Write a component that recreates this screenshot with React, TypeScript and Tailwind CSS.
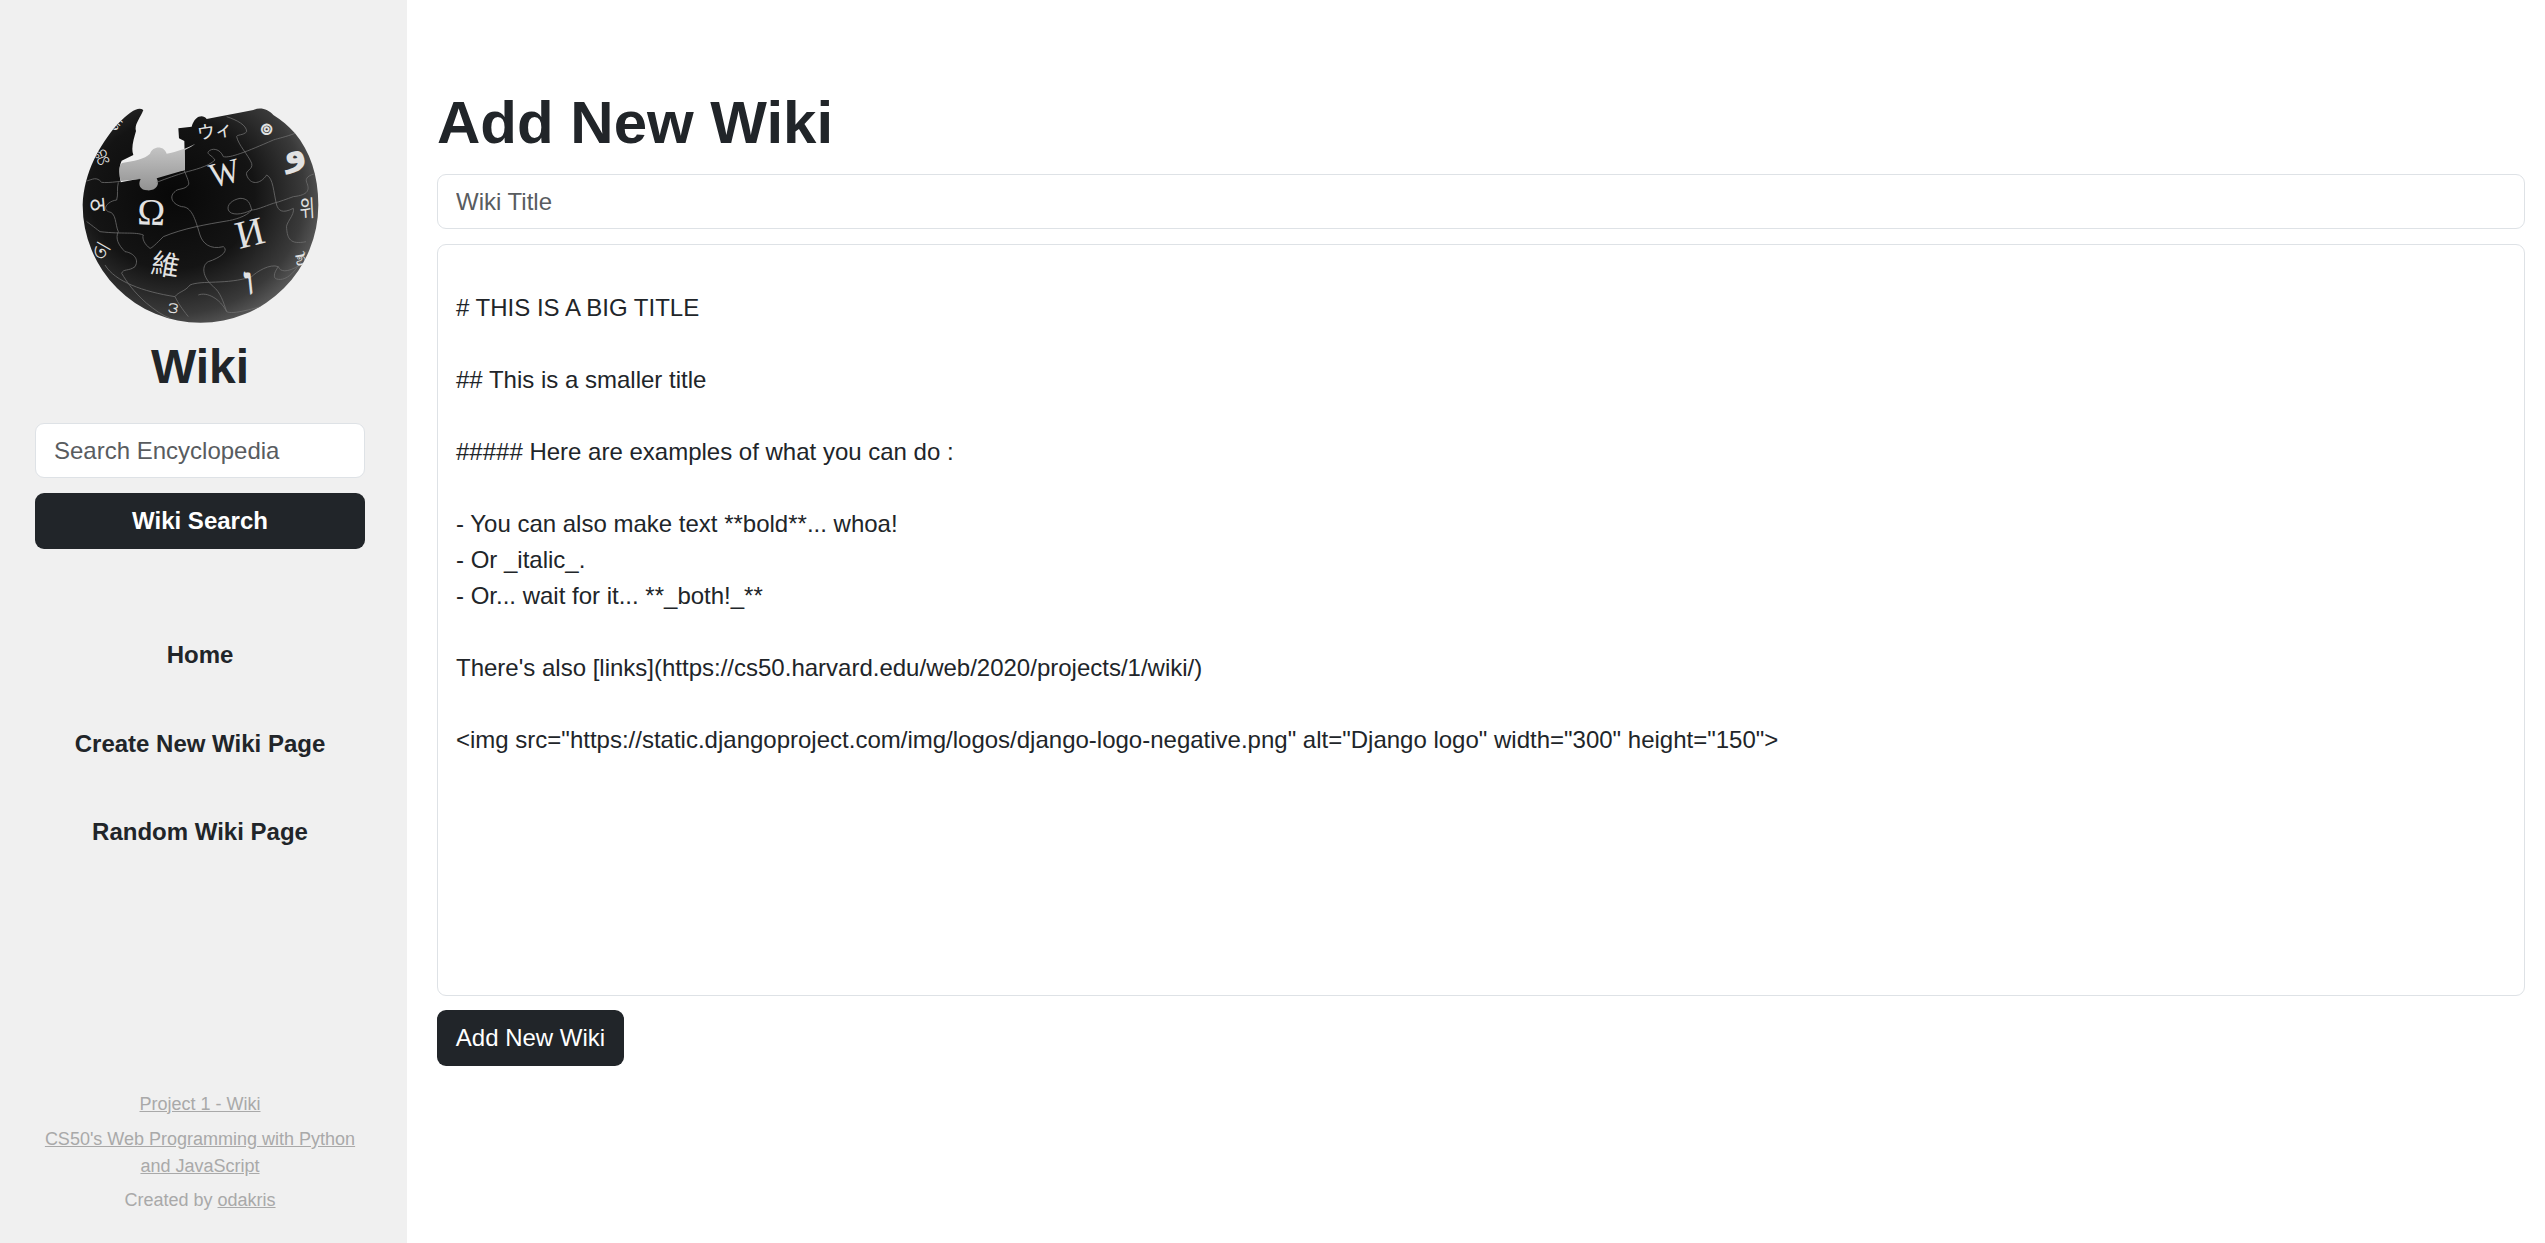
import React from 'react';

const CONTENT = `
# THIS IS A BIG TITLE

## This is a smaller title

##### Here are examples of what you can do :

- You can also make text **bold**... whoa!
- Or _italic_.
- Or... wait for it... **_both!_**

There's also [links](https://cs50.harvard.edu/web/2020/projects/1/wiki/)

<img src="https://static.djangoproject.com/img/logos/django-logo-negative.png" alt="Django logo" width="300" height="150">`;

// outline of the ball, with the missing pieces cut out at the top
const BALL =
  'M68 330 A353 353 0 0 0 775 330 C775 240 750 170 705 115 C685 92 665 75 640 60 C625 42 600 35 580 45 C535 55 485 62 440 72 C430 58 405 60 395 95 L355 100 L357 130 L373 138 L375 225 L182 262 C178 240 176 215 185 197 L220 180 C212 160 222 130 228 108 C222 90 240 70 250 45 C235 35 215 45 170 90 C120 150 72 230 68 330 Z';

const GREY_PIECE =
  'M182 258 C176 230 176 212 186 204 C220 198 255 192 270 176 C278 152 312 150 320 176 C350 170 385 158 406 146 C390 160 376 162 374 166 L375 225 L290 250 C302 272 285 288 262 286 C242 286 232 270 242 252 Z';

// puzzle seams of the globe, coordinates follow a 3x crop of the logo
const SEAMS = [
  'M68 258 C90 262 105 238 125 262 C145 265 190 258 240 250 M290 262 C320 250 350 240 375 232 C400 225 445 215 465 195 C455 180 440 178 445 170 C455 158 480 160 490 185 C510 190 560 170 640 135 C655 130 680 125 705 115',
  'M372 225 C380 245 390 265 385 270 C375 285 350 280 345 290 C330 300 330 325 365 335 C395 335 405 370 420 420 C428 445 450 465 490 455 C505 465 490 485 445 500 C425 510 425 545 460 575 C480 590 490 620 500 650',
  'M500 65 C530 75 560 90 560 110 C550 122 530 118 530 125 C535 150 565 180 575 205 C580 225 555 225 560 240 C570 270 600 270 620 240 C640 250 640 290 650 330 C655 345 665 358 700 340 C705 360 675 385 680 400 C682 430 690 450 738 440',
  'M770 235 C745 240 735 250 740 262 C750 285 745 300 700 305 C680 312 660 320 640 325 C610 335 590 345 575 345 C570 325 565 310 540 310 C515 315 500 330 505 345 C512 362 545 360 575 345 C560 365 520 375 500 378 C440 388 370 400 310 425 C290 445 275 460 270 460 C255 450 245 430 250 420 C225 410 190 418 120 410 C100 395 88 385 80 380',
  'M175 262 C170 280 175 300 170 315 C145 318 125 340 145 350 C170 352 165 390 175 410 C165 430 175 450 195 470 C215 472 240 490 225 515 C205 530 190 520 185 535 C200 560 220 590 260 625 C285 645 305 660 330 670',
  'M135 510 C165 560 250 590 345 605 C355 590 375 590 390 570 C425 555 500 570 575 545 C590 530 630 505 655 515 C660 530 680 535 720 510 M655 515 C640 535 640 550 650 552 C680 560 710 530 738 470',
  'M415 600 C440 590 480 610 500 650 C520 660 580 640 640 625 C665 615 690 600 700 590 M345 605 C355 625 365 640 385 665',
];

const WikiGlobe = () => (
  <svg width="280" height="240" viewBox="0 0 840 720" className="mx-auto block">
    <defs>
      <radialGradient id="sphere" cx="0.38" cy="0.4" r="0.7">
        <stop offset="0" stopColor="#080808" />
        <stop offset="0.5" stopColor="#141414" />
        <stop offset="0.8" stopColor="#3a3a3a" />
        <stop offset="1" stopColor="#6a6a6a" />
      </radialGradient>
      <linearGradient id="gap" x1="0" y1="0" x2="0" y2="1">
        <stop offset="0" stopColor="#c8c8c8" />
        <stop offset="1" stopColor="#929292" />
      </linearGradient>
      <clipPath id="ball-clip">
        <path d={BALL} />
      </clipPath>
    </defs>
    <path fill="url(#sphere)" d={BALL} />
    <path fill="url(#gap)" d={GREY_PIECE} />
    <g fill="none" stroke="#6e6e6e" strokeWidth="2.4" clipPath="url(#ball-clip)">
      {SEAMS.map((d) => (
        <path key={d} d={d} />
      ))}
    </g>
    <g fill="#e2e2e2" clipPath="url(#ball-clip)" className="font-['Liberation_Serif','Noto_Sans_CJK_SC',serif]">
      <text fontSize="104" transform="translate(458 278) rotate(-14) scale(0.92 1)">W</text>
      <text fontSize="112" transform="translate(231 388) rotate(2)">Ω</text>
      <text fontSize="118" transform="translate(538 462) rotate(-14)">И</text>
      <text fontSize="84" className="font-['Noto_Sans_CJK_TC',sans-serif]" transform="translate(270 532) rotate(10)">維</text>
      <text fontSize="54" className="font-['Noto_Sans_CJK_JP',sans-serif]" transform="translate(414 134) rotate(-8)">ウィ</text>
      <text fontSize="66" className="font-['Noto_Sans_CJK_KR',sans-serif]" transform="translate(720 366) rotate(-3) scale(0.75 1.05)">위</text>
      <text fontSize="120" fontWeight="700" transform="translate(556 600) rotate(-6)">ו</text>
      <g className="font-['DejaVu_Sans',sans-serif]">
        <text fontSize="110" fontWeight="700" transform="translate(676 212) rotate(-14)">و</text>
        <text fontSize="62" fontWeight="700" transform="translate(596 112) rotate(20)">๏</text>
        <text fontSize="66" transform="translate(90 312) rotate(85)">ठ</text>
        <text fontSize="50" transform="translate(108 198) rotate(-22)">ஜ</text>
        <text fontSize="50" transform="translate(165 112) rotate(-52)">ள</text>
        <text fontSize="60" transform="translate(92 474) rotate(30)">ত</text>
        <text fontSize="64" transform="translate(708 514) rotate(-10)">ಶ</text>
        <text fontSize="64" transform="translate(322 650) rotate(8)">ဒ</text>
      </g>
    </g>
  </svg>
);

const navLinks = ['Home', 'Create New Wiki Page', 'Random Wiki Page'];

export default function App() {
  return (
    <div className="flex min-h-[1243px] bg-white font-['Liberation_Sans',Arial,sans-serif] text-[24px] leading-[36px] text-[#212529]">
      {/* Sidebar */}
      <aside className="flex w-[407px] shrink-0 flex-col bg-[#f0f0f0] pr-[7px]">
        <div className="mt-[95px]">
          <WikiGlobe />
        </div>
        <h2 className="mt-[3px] text-center text-[48px] leading-[58px] font-bold">Wiki</h2>
        <form className="mx-[35px] mt-[27px]">
          <input
            type="text"
            placeholder="Search Encyclopedia"
            className="block h-[55px] w-full rounded-[9px] border border-[#dee2e6] bg-white px-[18px] placeholder:text-[#595c5f] outline-none"
          />
          <button type="button" className="mt-[15px] block h-[56px] w-full rounded-[9px] bg-[#212529] font-bold text-white">
            Wiki Search
          </button>
        </form>
        <nav className="mt-[88px] flex flex-col gap-[52.5px] text-center font-bold">
          {navLinks.map((link) => (
            <a key={link} href="#">
              {link}
            </a>
          ))}
        </nav>
        <footer className="mt-auto mb-[29px] px-[35px] text-center text-[18px] leading-[27px] text-[#a9a9a9]">
          <p className="mb-[8px]"><a href="#" className="underline">Project 1 - Wiki</a></p>
          <p className="mb-[7px]"><a href="#" className="underline">CS50's Web Programming with Python and JavaScript</a></p>
          <p>Created by <a href="#" className="underline">odakris</a></p>
        </footer>
      </aside>

      {/* Main */}
      <main className="flex-1 pt-[87px] pr-[20px] pl-[30px]">
        <h1 className="text-[60px] leading-[72px] font-bold">Add New Wiki</h1>
        <form className="mt-[15px]">
          <input
            type="text"
            placeholder="Wiki Title"
            className="block h-[55px] w-full rounded-[9px] border border-[#dee2e6] bg-white px-[18px] placeholder:text-[#595c5f] outline-none"
          />
          <textarea
            readOnly
            value={CONTENT}
            className="mt-[15px] block h-[752px] w-full resize-none rounded-[9px] border border-[#dee2e6] bg-white px-[18px] py-[9px] outline-none"
          />
          <button type="button" className="mt-[14px] block h-[56px] w-[187px] rounded-[9px] bg-[#212529] text-white">
            Add New Wiki
          </button>
        </form>
      </main>
    </div>
  );
}
